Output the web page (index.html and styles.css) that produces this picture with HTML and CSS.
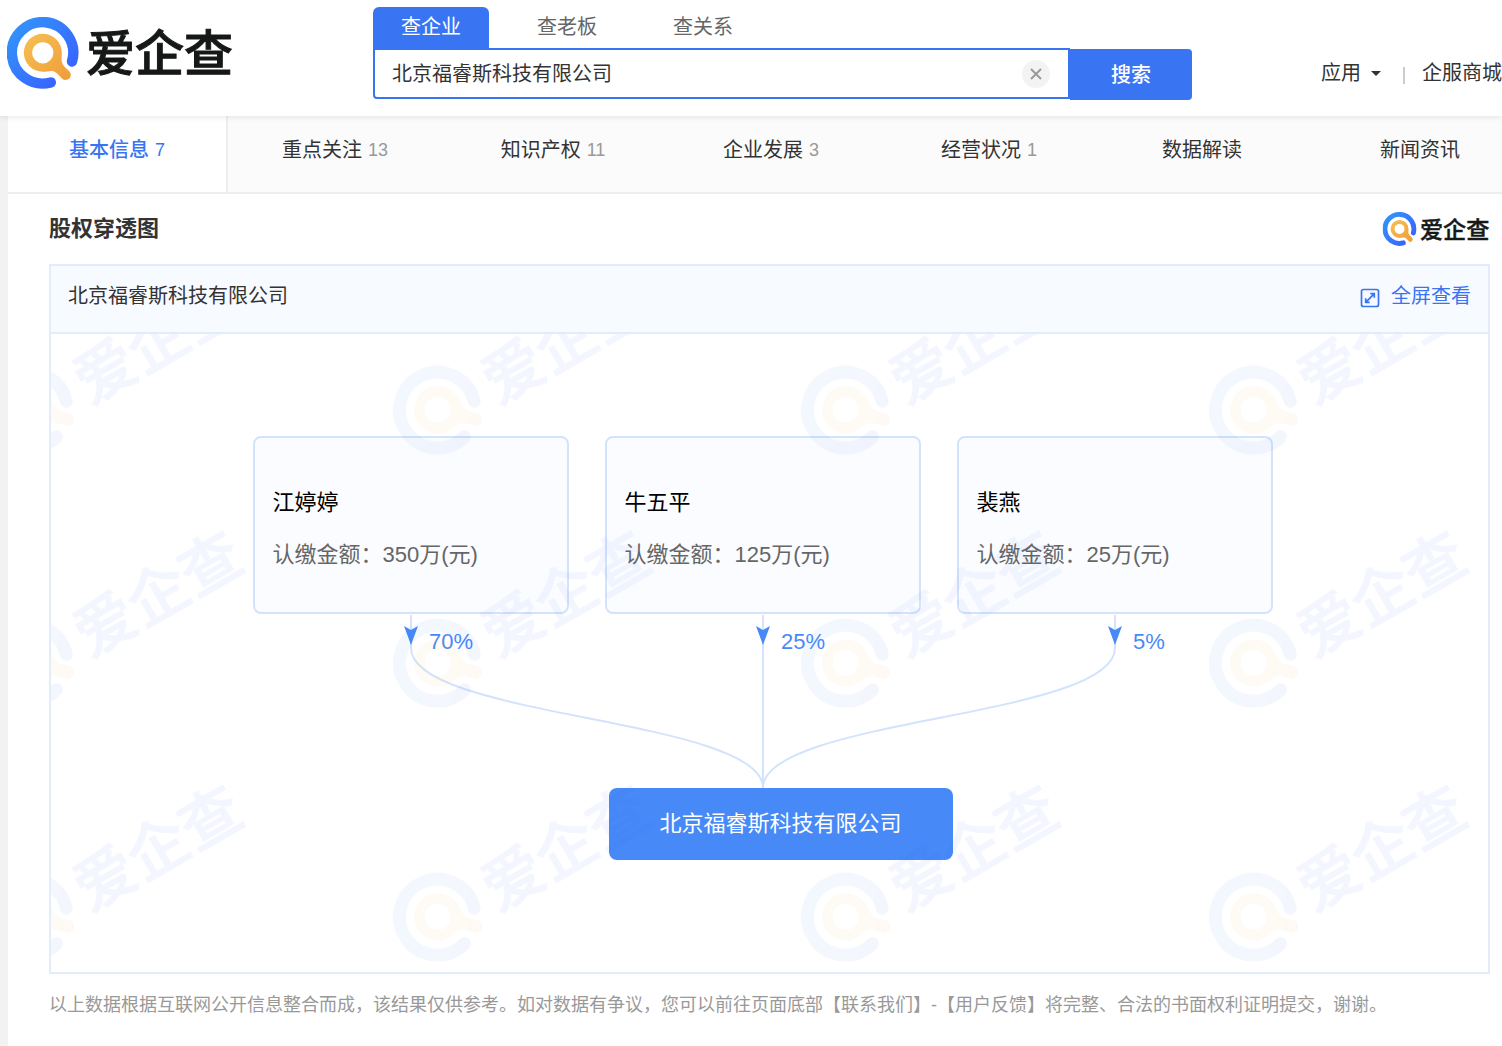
FILE: index.html
```html
<!DOCTYPE html>
<html lang="zh-CN">
<head>
<meta charset="utf-8">
<meta name="viewport" content="width=device-width, initial-scale=1">
<title>爱企查 - 股权穿透图</title>
<link rel="stylesheet" href="styles.css">
</head>
<body>
<svg class="defs" width="0" height="0" aria-hidden="true">
  <defs>
    <linearGradient id="ring" x1="0" y1="0" x2="1" y2="1">
      <stop offset="0" stop-color="#3296fa"/>
      <stop offset="1" stop-color="#3a5cff"/>
    </linearGradient>
    <linearGradient id="lens" x1="0" y1="0" x2="1" y2="1">
      <stop offset="0" stop-color="#f6c052"/>
      <stop offset="1" stop-color="#f09c38"/>
    </linearGradient>
    <symbol id="mark" viewBox="0 0 72 72">
      <path d="M65 44.5A30.7 30.7 0 1 0 43.8 65.4" fill="none" stroke="url(#ring)" stroke-width="10.4" stroke-linecap="round"/>
      <path fill="url(#lens)" fill-rule="evenodd" d="M35.8 16.800A19 19 0 0 1 54.800 35.800C54.800 40 53.900 44 55.800 47.200C57.200 50 60.200 52 62.300 54.300A5 5 0 0 1 55 61.500C52 58.500 50 55.500 46.500 54.200C43 53.400 40 54.800 35.800 54.800A19 19 0 0 1 35.800 16.800zM35.800 25.200a10.600 10.600 0 1 0 0 21.200a10.600 10.600 0 0 0 0-21.200z"/>
    </symbol>
  </defs>
</svg>

<header class="topbar">
  <a class="logo" href="#" aria-label="爱企查">
    <svg class="brand" viewBox="0 0 226 72" width="226" height="72">
      <use href="#mark" width="72" height="72"/>
      <text class="logo-text" x="79" y="54">爱企查</text>
    </svg>
  </a>
  <form class="search">
    <div class="search-tabs">
      <button type="button" class="search-tab is-active">查企业</button>
      <button type="button" class="search-tab">查老板</button>
      <button type="button" class="search-tab">查关系</button>
    </div>
    <div class="search-row">
      <div class="search-box">
        <input class="search-input" type="text" aria-label="搜索企业" value="北京福睿斯科技有限公司">
        <button type="button" class="clear" aria-label="清除">
          <svg viewBox="0 0 12 12" width="12" height="12"><path d="M1 1l10 10M11 1L1 11" stroke="#999" stroke-width="2"/></svg>
        </button>
      </div>
      <button type="submit" class="search-submit">搜索</button>
    </div>
  </form>
  <nav class="links">
    <a class="link" href="#">应用<svg viewBox="0 0 10 5" width="10" height="5"><path d="M0 0h10L5 5z" fill="#333"/></svg></a>
    <span class="divider"></span>
    <a class="link" href="#">企服商城</a>
  </nav>
</header>

<main class="page">
  <nav class="tabs">
    <a class="tab is-active" href="#">基本信息<span class="count">7</span></a>
    <a class="tab" href="#">重点关注<span class="count">13</span></a>
    <a class="tab" href="#">知识产权<span class="count">11</span></a>
    <a class="tab" href="#">企业发展<span class="count">3</span></a>
    <a class="tab" href="#">经营状况<span class="count">1</span></a>
    <a class="tab" href="#">数据解读<span class="count"></span></a>
    <a class="tab" href="#">新闻资讯<span class="count"></span></a>
  </nav>

  <section class="section">
    <div class="section-head">
      <h2 class="section-title">股权穿透图</h2>
      <svg class="brand" viewBox="0 0 226 72" width="108" height="34" role="img" aria-label="爱企查">
        <use href="#mark" width="72" height="72"/>
        <text class="logo-text" x="79" y="54">爱企查</text>
      </svg>
    </div>

    <div class="panel">
      <div class="panel-head">
        <span>北京福睿斯科技有限公司</span>
        <a class="fullscreen" href="#">
          <svg viewBox="0 0 20 20" width="20" height="20" fill="none" stroke="#3975f3" stroke-width="1.700">
            <rect x="1.500" y="1.500" width="17" height="17" rx="2"/>
            <path d="M5.700 14.300l8.600-8.600M10.300 5.700h4v4M5.700 10.300v4h4"/>
          </svg>全屏查看</a>
      </div>

      <div class="chart">
        <div class="tree">
          <div class="holders">
            <article class="holder"><h3 class="holder-name">江婷婷</h3><p class="holder-amount">认缴金额：350万(元)</p></article>
            <article class="holder"><h3 class="holder-name">牛五平</h3><p class="holder-amount">认缴金额：125万(元)</p></article>
            <article class="holder"><h3 class="holder-name">裴燕</h3><p class="holder-amount">认缴金额：25万(元)</p></article>
          </div>
          <svg class="edges" viewBox="0 0 1020 174" width="1020" height="174">
            <g fill="none" stroke="#d3e3fd" stroke-width="2">
              <path d="M158 1V34C158 104 510 104 510 174"/>
              <path d="M510 1V174"/>
              <path d="M862 1V34C862 104 510 104 510 174"/>
            </g>
            <g fill="#4789f7">
              <path d="M158 31l-7-19 7 4 7-4z"/>
              <path d="M510 31l-7-19 7 4 7-4z"/>
              <path d="M862 31l-7-19 7 4 7-4z"/>
            </g>
            <g class="share">
              <text x="176" y="35">70%</text>
              <text x="528" y="35">25%</text>
              <text x="880" y="35">5%</text>
            </g>
          </svg>
          <div class="company">北京福睿斯科技有限公司</div>
        </div>

        <svg class="watermark" width="100%" height="100%" aria-hidden="true">
          <defs>
            <g id="stamp">
              <g transform="rotate(-30) scale(1.236) translate(-36 -36)">
                <use href="#mark" width="72" height="72"/>
                <text class="stamp-text" x="80" y="57">爱企查</text>
              </g>
            </g>
          </defs>
          <use href="#stamp" x="-21" y="76"/><use href="#stamp" x="387" y="76"/><use href="#stamp" x="795" y="76"/><use href="#stamp" x="1203" y="76"/>
          <use href="#stamp" x="-21" y="329"/><use href="#stamp" x="387" y="329"/><use href="#stamp" x="795" y="329"/><use href="#stamp" x="1203" y="329"/>
          <use href="#stamp" x="-21" y="583"/><use href="#stamp" x="387" y="583"/><use href="#stamp" x="795" y="583"/><use href="#stamp" x="1203" y="583"/>
        </svg>
      </div>
    </div>

    <p class="note">以上数据根据互联网公开信息整合而成，该结果仅供参考。如对数据有争议，您可以前往页面底部【联系我们】-【用户反馈】将完整、合法的书面权利证明提交，谢谢。</p>
  </section>
</main>
</body>
</html>
```
FILE: styles.css
```css
* { box-sizing: border-box; }

body {
  margin: 0;
  min-height: 100vh;
  display: flex;
  flex-direction: column;
  overflow-x: hidden;
  background: #f2f2f2;
  color: #333;
  font: 20px/30px "Liberation Sans", "Noto Sans CJK SC", sans-serif;
}

a { color: inherit; text-decoration: none; }
h2, h3, p { margin: 0; }
button, input { font: inherit; border: 0; padding: 0; }
svg { flex: none; }
.defs { position: absolute; }

.topbar {
  position: relative;
  z-index: 1;
  display: flex;
  align-items: flex-start;
  height: 116px;
  padding-left: 7px;
  background: #fff;
  box-shadow: 0 1px 6px rgba(0, 0, 0, .1);
}

.logo { display: flex; padding-top: 17px; }
.brand { overflow: visible; }
.logo-text, .stamp-text {
  font-family: "Noto Sans CJK SC", sans-serif;
  font-size: 49px;
  font-weight: 500;
}
.logo-text { fill: #151817; stroke: #151817; stroke-width: 1px; }

.search { width: 819px; margin-left: 140px; padding-top: 7px; }
.search-tabs { display: flex; gap: 20px; }
.search-tab {
  width: 116px;
  height: 41px;
  padding-bottom: 2px;
  background: none;
  color: #666;
}
.search-tab.is-active {
  border-radius: 6px 6px 0 0;
  background: #3975f3;
  color: #fff;
}
.search-row { display: flex; }
.search-box {
  flex: 1;
  display: flex;
  align-items: center;
  height: 51px;
  padding: 0 18px 0 17px;
  border: 2px solid #3975f3;
  border-radius: 0 0 0 4px;
}
.search-input {
  flex: 1;
  min-width: 0;
  background: none;
  color: #333;
  outline: 0;
}
.clear {
  display: grid;
  place-items: center;
  width: 28px;
  height: 28px;
  border-radius: 50%;
  background: #f3f3f3;
}
.search-submit {
  width: 122px;
  height: 51px;
  margin-top: 1px;
  border-radius: 0 4px 4px 0;
  background: #3975f3;
  color: #fff;
  font-weight: 500;
}

.links {
  display: flex;
  align-items: center;
  margin-left: auto;
  padding-top: 58px;
  white-space: nowrap;
}
.link { display: flex; align-items: center; gap: 10px; }
.divider { width: 2px; height: 17px; margin: 4px 17px 0 22px; background: #ccc; }

.page { flex: 1; margin-left: 8px; background: #fff; }

.tabs {
  display: flex;
  overflow: hidden;
  border-bottom: 2px solid #eee;
  background: #fbfbfb;
}
.tab {
  flex: 0 0 218px;
  display: flex;
  justify-content: center;
  height: 76px;
  padding-top: 19px;
}
.tab.is-active {
  flex-basis: 220px;
  margin-right: -2px;
  border-right: 2px solid #eee;
  background: #fff;
  color: #3975f3;
  font-weight: 500;
}
.count { min-width: 4px; margin-left: 6px; color: #999; font-size: 18px; font-weight: 400; }
.tab.is-active .count { color: inherit; }

.section { padding: 17px 12px 24px 41px; }
.section-head {
  display: flex;
  justify-content: space-between;
  align-items: center;
  height: 36px;
  margin-bottom: 17px;
}
.section-title { font-size: 22px; font-weight: 700; }

.panel { border: 2px solid #e3ecfb; }
.panel-head {
  display: flex;
  justify-content: space-between;
  height: 68px;
  padding: 15px 17px 0;
  border-bottom: 2px solid #e3ecfb;
  background: #f7faff;
}
.fullscreen { display: flex; gap: 11px; color: #3975f3; }
.fullscreen svg { margin-top: 7px; }

.chart { position: relative; overflow: hidden; padding: 102px 14px 112px 0; }
.tree { width: 1020px; margin: 0 auto; }
.holders { display: flex; gap: 36px; }
.holder {
  flex: 1;
  height: 178px;
  padding: 49px 18px 0;
  border: 2px solid #d3e3fd;
  border-radius: 8px;
  background: #fbfcff;
  font-size: 22px;
  line-height: 32px;
}
.holder-name { margin-bottom: 20px; color: #000; font-size: 22px; font-weight: 400; }
.holder-amount { color: #666; }
.edges { display: block; }
.share { fill: #4789f7; font-size: 22px; }
.company {
  width: 344px;
  margin-left: 356px;
  border-radius: 8px;
  background: #4789f7;
  color: #fff;
  font-size: 22px;
  line-height: 72px;
  text-align: center;
}

.watermark { position: absolute; inset: 0; opacity: .05; pointer-events: none; }
.stamp-text { fill: #3a6cff; stroke: #3a6cff; stroke-width: 1px; }

.note { margin-top: 16px; color: #999; font-size: 18px; }
```
